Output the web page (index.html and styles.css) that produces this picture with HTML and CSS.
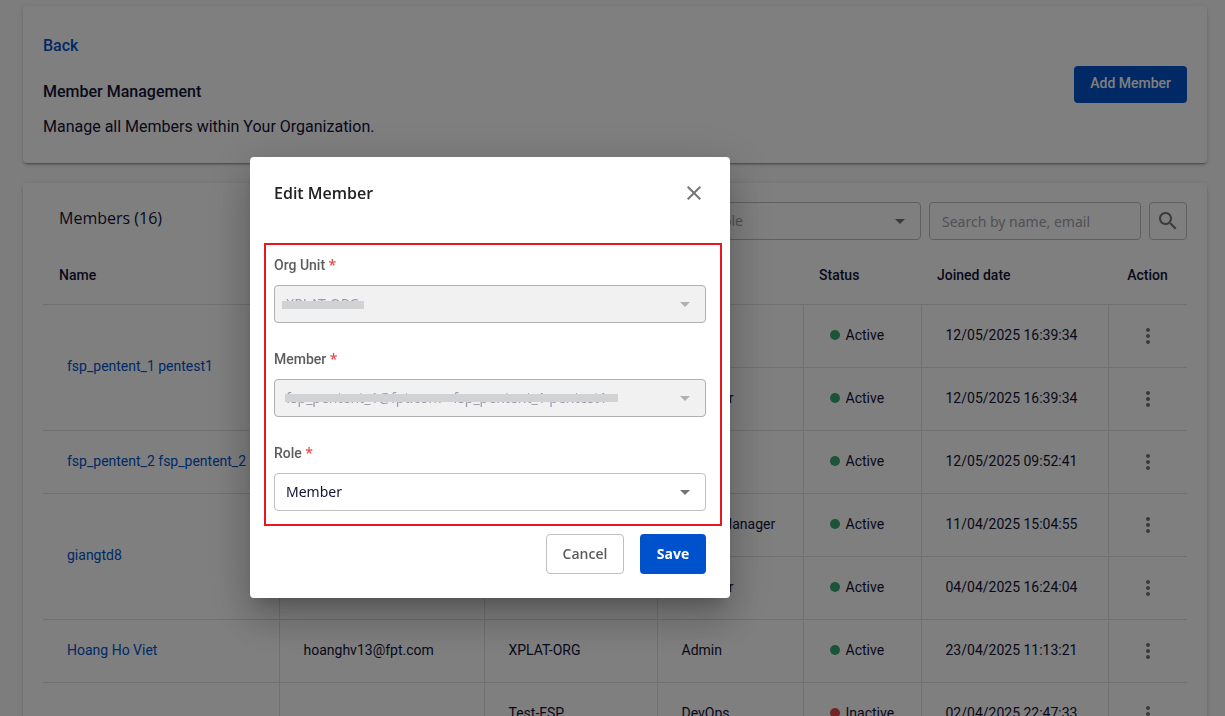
FILE: index.html
```html
<!DOCTYPE html>
<html lang="en">
<head>
    <meta charset="UTF-8">
    <meta name="viewport" content="width=device-width, initial-scale=1.0">
    <title>Member Management</title>
    <link rel="stylesheet" href="styles.css">
</head>
<body>
    <!-- icons used more than once -->
    <svg class="icon-defs" aria-hidden="true">
        <symbol id="arrow" viewBox="0 0 24 24"><path d="M7 10l5 5 5-5z"/></symbol>
        <symbol id="dots" viewBox="0 0 24 24"><path d="M12 8c1.1 0 2-.9 2-2s-.9-2-2-2-2 .9-2 2 .9 2 2 2zm0 2c-1.1 0-2 .9-2 2s.9 2 2 2 2-.9 2-2-.9-2-2-2zm0 6c-1.1 0-2 .9-2 2s.9 2 2 2 2-.9 2-2-.9-2-2-2z"/></symbol>
    </svg>

    <main class="page">
        <section class="card intro">
            <div>
                <a class="back" href="#">Back</a>
                <h1>Member Management</h1>
                <p>Manage all Members within Your Organization.</p>
            </div>
            <button class="btn btn-add">Add Member</button>
        </section>

        <section class="card members">
            <div class="toolbar">
                <h2>Members (16)</h2>
                <div class="select-wrap filter">
                    <select class="placeholder" aria-label="Role filter">
                        <option>Select role</option>
                    </select>
                    <svg class="arrow"><use href="#arrow"/></svg>
                </div>
                <input class="search" type="text" placeholder="Search by name, email" aria-label="Search by name, email">
                <button class="btn-search" aria-label="Search">
                    <svg viewBox="0 0 24 24"><path d="M15.5 14h-.79l-.28-.27C15.41 12.59 16 11.11 16 9.5 16 5.91 13.09 3 9.5 3S3 5.91 3 9.5 5.91 16 9.5 16c1.61 0 3.09-.59 4.23-1.57l.27.28v.79l5 4.99L20.49 19l-4.99-5zm-6 0C7.01 14 5 11.99 5 9.5S7.01 5 9.5 5 14 7.01 14 9.5 11.99 14 9.5 14z"/></svg>
                </button>
            </div>

            <table>
                <colgroup>
                    <col>
                    <col class="col-email">
                    <col class="col-unit">
                    <col class="col-role">
                    <col class="col-status">
                    <col class="col-date">
                    <col class="col-action">
                </colgroup>
                <thead>
                    <tr>
                        <th>Name</th>
                        <th>Email</th>
                        <th>Org Unit</th>
                        <th>Role</th>
                        <th>Status</th>
                        <th>Joined date</th>
                        <th class="action">Action</th>
                    </tr>
                </thead>
                <tbody>
                    <tr>
                        <td rowspan="2"><a href="#">fsp_pentent_1 pentest1</a></td>
                        <td rowspan="2"></td>
                        <td>XPLAT-ORG</td>
                        <td>Admin</td>
                        <td><span class="status">Active</span></td>
                        <td>12/05/2025 16:39:34</td>
                        <td class="action"><button aria-label="Actions"><svg><use href="#dots"/></svg></button></td>
                    </tr>
                    <tr>
                        <td>XPLAT-ORG</td>
                        <td>Member</td>
                        <td><span class="status">Active</span></td>
                        <td>12/05/2025 16:39:34</td>
                        <td class="action"><button aria-label="Actions"><svg><use href="#dots"/></svg></button></td>
                    </tr>
                    <tr>
                        <td><a href="#">fsp_pentent_2 fsp_pentent_2</a></td>
                        <td></td>
                        <td>XPLAT-ORG</td>
                        <td>Admin</td>
                        <td><span class="status">Active</span></td>
                        <td>12/05/2025 09:52:41</td>
                        <td class="action"><button aria-label="Actions"><svg><use href="#dots"/></svg></button></td>
                    </tr>
                    <tr>
                        <td rowspan="2"><a href="#">giangtd8</a></td>
                        <td rowspan="2"></td>
                        <td>XPLAT-ORG</td>
                        <td>Team Manager</td>
                        <td><span class="status">Active</span></td>
                        <td>11/04/2025 15:04:55</td>
                        <td class="action"><button aria-label="Actions"><svg><use href="#dots"/></svg></button></td>
                    </tr>
                    <tr>
                        <td>XPLAT-ORG</td>
                        <td>Member</td>
                        <td><span class="status">Active</span></td>
                        <td>04/04/2025 16:24:04</td>
                        <td class="action"><button aria-label="Actions"><svg><use href="#dots"/></svg></button></td>
                    </tr>
                    <tr>
                        <td><a href="#">Hoang Ho Viet</a></td>
                        <td>hoanghv13@fpt.com</td>
                        <td>XPLAT-ORG</td>
                        <td>Admin</td>
                        <td><span class="status">Active</span></td>
                        <td>23/04/2025 11:13:21</td>
                        <td class="action"><button aria-label="Actions"><svg><use href="#dots"/></svg></button></td>
                    </tr>
                    <tr>
                        <td></td>
                        <td></td>
                        <td>Test-FSP</td>
                        <td>DevOps</td>
                        <td><span class="status inactive">Inactive</span></td>
                        <td>02/04/2025 22:47:33</td>
                        <td class="action"><button aria-label="Actions"><svg><use href="#dots"/></svg></button></td>
                    </tr>
                </tbody>
            </table>
        </section>
    </main>

    <div class="overlay">
        <form class="dialog" role="dialog" aria-labelledby="dialogTitle">
            <div class="dialog-header">
                <h2 id="dialogTitle">Edit Member</h2>
                <button class="close" type="button" aria-label="Close">
                    <svg viewBox="0 0 24 24"><path d="M19 6.41L17.59 5 12 10.59 6.41 5 5 6.41 10.59 12 5 17.59 6.41 19 12 13.41 17.59 19 19 17.59 13.41 12z"/></svg>
                </button>
            </div>

            <div class="fields">
                <div class="field">
                    <label for="orgUnit">Org Unit <span>*</span></label>
                    <div class="select-wrap">
                        <select id="orgUnit" disabled>
                            <option>XPLAT-ORG</option>
                        </select>
                        <i class="strike strike-org"></i>
                        <svg class="arrow"><use href="#arrow"/></svg>
                    </div>
                </div>
                <div class="field">
                    <label for="member">Member <span>*</span></label>
                    <div class="select-wrap">
                        <select id="member" disabled>
                            <option>fsp_pentent_1@fpt.com - fsp_pentent_1 pentest1</option>
                        </select>
                        <i class="strike strike-member"></i>
                        <svg class="arrow"><use href="#arrow"/></svg>
                    </div>
                </div>
                <div class="field">
                    <label for="role">Role <span>*</span></label>
                    <div class="select-wrap">
                        <select id="role">
                            <option>Member</option>
                        </select>
                        <svg class="arrow"><use href="#arrow"/></svg>
                    </div>
                </div>
            </div>

            <div class="dialog-footer">
                <button class="btn btn-cancel" type="button">Cancel</button>
                <button class="btn btn-save" type="submit">Save</button>
            </div>
        </form>
    </div>
</body>
</html>
```
FILE: styles.css
```css
*{
    box-sizing: border-box;
    margin: 0;
    padding: 0;
}
body{
    font-family: Roboto, sans-serif;
    font-size: 14px;
    line-height: 20px;
    color: #121236;
    background: #fafafa;
    overflow: hidden;
}
a{
    color: #0052cc;
    text-decoration: none;
}
svg{
    display: block;
    width: 24px;
    height: 24px;
    fill: #757575;
}
button, input, select{
    font-family: "Noto Sans", sans-serif;
    font-size: 14px;
}
button{
    border: 0;
    background: none;
    cursor: pointer;
}
.icon-defs{
    display: none;
}

.page{
    padding: 6px 18px 0 23px;
}
.card{
    background: #fff;
    border-radius: 4px;
    box-shadow: 0 3px 1px -2px rgba(0,0,0,.2), 0 2px 2px rgba(0,0,0,.14), 0 1px 5px rgba(0,0,0,.12);
}
.intro{
    display: flex;
    justify-content: space-between;
    align-items: center;
    padding: 28px 20px 24px;
    margin-bottom: 20px;
    font-size: 16px;
    line-height: 24px;
}
.intro h1{
    margin: 22px 0 11px;
    font-size: 16px;
    font-weight: 500;
}
.back{
    display: block;
    font-weight: 500;
}
.btn{
    border-radius: 4px;
    font-weight: 600;
}
.btn-add{
    height: 37px;
    margin-bottom: 4px;
    padding: 0 16px 4px;
    background: #0052cc;
    color: #fff;
    font-family: Roboto, sans-serif;
    font-weight: 500;
}

.members{
    padding: 19px 20px 0;
}
.toolbar{
    display: flex;
    gap: 8px;
    margin-bottom: 6px;
}
.toolbar h2{
    flex: 1;
    padding: 4px 16px;
    font-family: "Open Sans", sans-serif;
    font-size: 16px;
    font-weight: 400;
    line-height: 24px;
}

.select-wrap{
    position: relative;
}
.select-wrap select, .search, .btn-search{
    width: 100%;
    height: 38px;
    padding: 0 12px;
    border: 1px solid #bfbfbf;
    border-radius: 4px;
    background: #fff;
    color: #121236;
}
.select-wrap select{
    appearance: none;
    padding: 0 40px 2px 11px;
}
.arrow{
    position: absolute;
    top: 7px;
    right: 9px;
    pointer-events: none;
}
.filter{
    width: 258px;
}
.select-wrap .placeholder, .search::placeholder{
    color: #a0a0ac;
}
.search{
    width: 212px;
}
.btn-search{
    width: 38px;
    padding: 0 6px;
}

table{
    width: 100%;
    table-layout: fixed;
    border-collapse: collapse;
}
.col-email{ width: 205px; }
.col-unit{ width: 173px; }
.col-role{ width: 146px; }
.col-status{ width: 118px; }
.col-date{ width: 187px; }
.col-action{ width: 79px; }
th{
    height: 58px;
    padding: 0 16px;
    text-align: left;
    font-weight: 500;
    border-bottom: 1px solid #e0e0e0;
}
td{
    height: 63px;
    padding: 0 24px 2px;
    border-bottom: 1px solid #e0e0e0;
    border-right: 1px solid #e0e0e0;
    white-space: nowrap;
}
th.action, td.action{
    padding: 0;
    border-right: 0;
    text-align: center;
}
.action button{
    vertical-align: middle;
}
.status{
    display: flex;
    align-items: center;
    gap: 6px;
    margin: 0 -20px 0 2px;
}
.status::before{
    content: "";
    width: 10px;
    height: 10px;
    border-radius: 50%;
    background: #36a873;
}
.status.inactive::before{
    background: #e5484d;
}

.overlay{
    position: fixed;
    inset: 0;
    display: flex;
    justify-content: center;
    align-items: flex-start;
    padding: 157px 245px 0 0;
    background: rgba(0,0,0,.5);
}
.dialog{
    width: 480px;
    padding: 24px;
    background: #fff;
    border-radius: 4px;
    box-shadow: 0 11px 15px -7px rgba(0,0,0,.2), 0 24px 38px 3px rgba(0,0,0,.14), 0 9px 46px 8px rgba(0,0,0,.12);
}
.dialog-header{
    display: flex;
    justify-content: space-between;
    align-items: center;
    margin-bottom: 38px;
}
.dialog-header h2{
    font-family: "Open Sans", sans-serif;
    font-size: 16px;
    font-weight: 600;
    line-height: 24px;
    color: #212121;
}
.fields{
    display: grid;
    gap: 26px;
    margin: 0 -16px 8px -10px;
    padding: 10px 14px 13px 8px;
    border: 2px solid #e5191e;
}
.field label{
    display: block;
    margin-bottom: 10px;
    font-weight: 500;
    color: #5c5c5c;
}
.field label span{
    font-family: "Noto Sans", sans-serif;
    line-height: 16px;
    color: #ee4444;
}
.field select:disabled{
    background: #f1f1f1;
    border-color: #b0b0b0;
    color: #9a9ab0;
    opacity: 1;
}
.field select:disabled ~ .arrow{
    fill: #b0b0b0;
}
/* bars that cover the values of the locked fields */
.strike{
    position: absolute;
    height: 8px;
    background: #d1d2d4;
}
.strike-org{
    top: 16px;
    left: 8px;
    width: 82px;
}
.strike-member{
    top: 15px;
    left: 11px;
    width: 333px;
}
.dialog-footer{
    display: flex;
    justify-content: flex-end;
    gap: 16px;
}
.btn-cancel, .btn-save{
    height: 40px;
    padding: 0 14px 2px;
    font-family: "Open Sans", sans-serif;
}
.btn-cancel{
    min-width: 78px;
    border: 1px solid #bfbfbf;
    color: #5c5c5c;
}
.btn-save{
    min-width: 66px;
    background: #0052cc;
    color: #fff;
    font-weight: 700;
}
```
